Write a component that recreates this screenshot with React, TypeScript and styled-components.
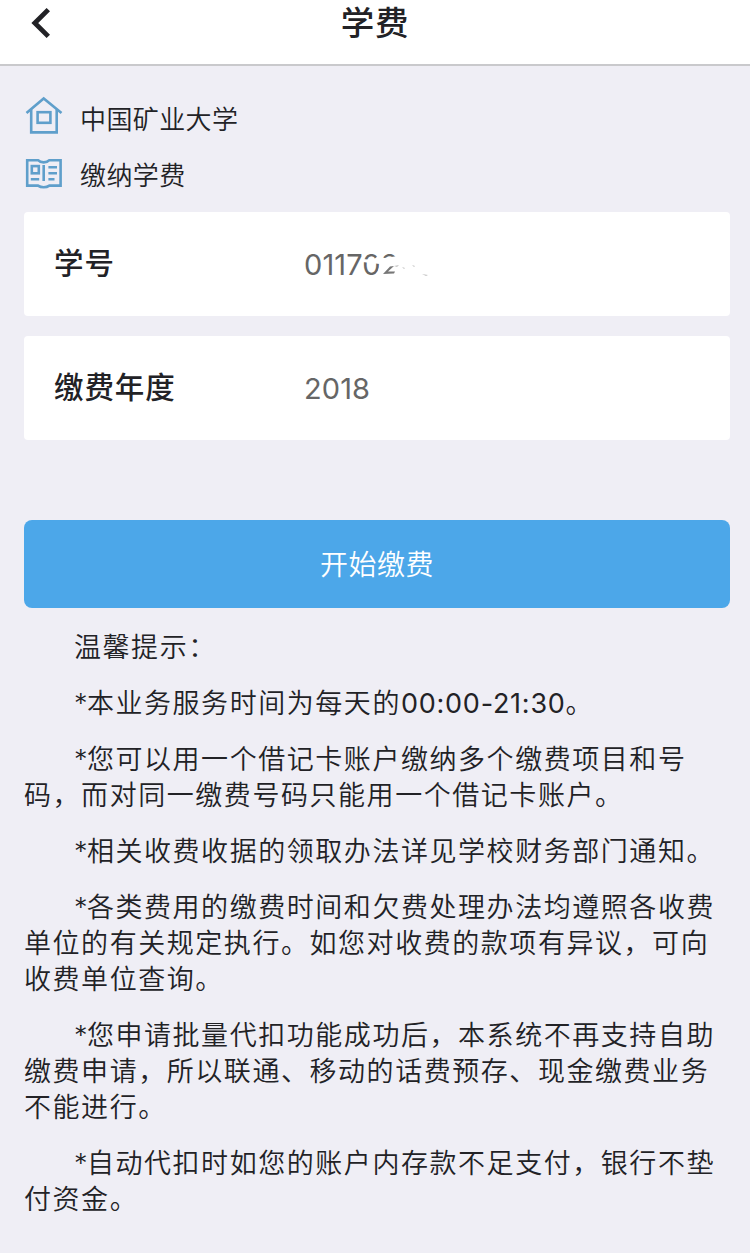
import React from "react";
import styled, { createGlobalStyle } from "styled-components";

const Global = createGlobalStyle`
  * { box-sizing: border-box; }
  body {
    margin: 0;
    background: #efeef5;
    color: #222226;
    font-family: Inter, "Noto Sans CJK SC", sans-serif;
  }
`;

const Page = styled.div`
  min-height: 1253px;
  overflow: hidden;
`;

const Header = styled.header`
  display: grid;
  grid-template-columns: 100px 1fr 100px;
  height: 66px;
  background: #fff;
  border-bottom: 2px solid #c9c9cc;
`;

const BackButton = styled.button`
  display: flex;
  width: 60px;
  height: 48px;
  padding: 7px 0 0 31px;
  border: 0;
  background: none;
`;

const Title = styled.h1`
  margin: 0;
  text-align: center;
  font-size: 33.5px;
  font-weight: 500;
  line-height: 46px;
  letter-spacing: 0.8px;
`;

const Main = styled.main`
  padding: 24px 20px 0 24px;
`;

const InfoRow = styled.div`
  display: flex;
  align-items: center;
  gap: 16px;
  height: 56px;
  font-size: 26px;
  font-weight: 350;
  line-height: 36px;
  letter-spacing: 0.4px;
`;

const InfoText = styled.span`
  padding-top: 3px;
`;

const Field = styled.div<{ $gap: number }>`
  display: flex;
  align-items: center;
  height: 104px;
  margin-top: ${(p) => p.$gap}px;
  padding: 0 30px 0 30px;
  border-radius: 4px;
  background: #fff;
`;

const FieldLabel = styled.span`
  width: 250px;
  padding-bottom: 2px;
  font-size: 29.5px;
  font-weight: 500;
  line-height: 40px;
  letter-spacing: 0.9px;
`;

const FieldValue = styled.span`
  position: relative;
  padding-top: 2px;
  color: #666;
  font-size: 29px;
  font-weight: 400;
  line-height: 40px;
  letter-spacing: 0.1px;
`;

const Smudge = styled.svg`
  position: absolute;
  left: 56px;
  top: 5px;
`;

const PayButton = styled.button`
  display: block;
  width: 100%;
  height: 88px;
  margin: 80px 0 22px;
  padding: 0 0 2px;
  border: 0;
  border-radius: 8px;
  background: #4ca7e9;
  color: #fff;
  font-family: inherit;
  font-size: 28px;
  font-weight: 350;
  letter-spacing: 0.5px;
`;

const Tip = styled.p`
  margin: 0 0 20px;
  font-size: 27px;
  font-weight: 350;
  line-height: 36px;
  letter-spacing: 1.55px;
`;

const Line = styled.span<{ $first: boolean }>`
  display: block;
  padding-left: ${(p) => (p.$first ? 50 : 0)}px;
  white-space: nowrap;
`;

const Digits = styled.span`
  font-weight: 370;
  letter-spacing: 0.75px;
`;

const Star = styled.span`
  letter-spacing: -0.6px;
`;

const tips: React.ReactNode[][] = [
  ["温馨提示："],
  [<><Star>*</Star>本业务服务时间为每天的<Digits>00:00-21:30</Digits>。</>],
  [<><Star>*</Star>您可以用一个借记卡账户缴纳多个缴费项目和号</>, "码，而对同一缴费号码只能用一个借记卡账户。"],
  [<><Star>*</Star>相关收费收据的领取办法详见学校财务部门通知。</>],
  [<><Star>*</Star>各类费用的缴费时间和欠费处理办法均遵照各收费</>, "单位的有关规定执行。如您对收费的款项有异议，可向", "收费单位查询。"],
  [<><Star>*</Star>您申请批量代扣功能成功后，本系统不再支持自助</>, "缴费申请，所以联通、移动的话费预存、现金缴费业务", "不能进行。"],
  [<><Star>*</Star>自动代扣时如您的账户内存款不足支付，银行不垫</>, "付资金。"],
];

const HouseIcon = () => (
  <svg width="40" height="46" viewBox="0 0 40 46" fill="none" stroke="#5f9fcb" strokeWidth="2.6">
    <path d="M2.5 18 L19.7 3.5 L37.5 18" />
    <path d="M7.2 14.5 V37.4 H32.7 V14.5" />
    <rect x="13.6" y="17.2" width="12.8" height="10.6" />
  </svg>
);

const BookIcon = () => (
  <svg width="40" height="40" viewBox="0 0 40 40" fill="none" stroke="#5f9fcb" strokeWidth="2.6">
    <path d="M3.2 6.2 H14 Q16 8.4 19.7 8.4 Q23.4 8.4 25.4 6.2 H36.6 V31.6 H25.4 Q23 33.3 19.7 33.3 Q16.4 33.3 14 31.6 H3.2 Z" />
    <rect x="7.8" y="12.1" width="7" height="7.2" />
    <path d="M19.7 11 V27 M24.4 13.3 H33 M24.4 19.3 H33 M24.4 25.3 H30.5 M6.8 25.3 H15.2" />
  </svg>
);

export default function App() {
  return (
    <Page>
      <Global />
      <Header>
        <BackButton aria-label="返回">
          <svg width="22" height="32" viewBox="0 0 22 32" fill="none" stroke="#222226" strokeWidth="4.8">
            <path d="M17.3 2.6 L3.8 16 L17.3 29.4" />
          </svg>
        </BackButton>
        <Title>学费</Title>
      </Header>
      <Main>
        <InfoRow><HouseIcon /><InfoText>中国矿业大学</InfoText></InfoRow>
        <InfoRow><BookIcon /><InfoText>缴纳学费</InfoText></InfoRow>
        <Field $gap={10}>
          <FieldLabel>学号</FieldLabel>
          <FieldValue>
            011702
            <Smudge width="72" height="34" viewBox="0 0 72 34">
              <path fill="#fff" d="M3 11 L13 12 L18 8 L24 10 L38 8 L46 9 V30 H22 L13 29 L18 23 L20 16 L10 15 L3 14 Z" />
              <path fill="#777" d="M23 26 L30 18.5 L34 18 L28 23.5 L35 23.5 L34 25.5 Z" />
              <path fill="#c4c4c4" d="M34 18 l5 -1 -2 2 Z M42 19 l3 1 -1 1 Z M52 17 l3 1 -1 1 Z M62 26 l6 1 -2 1 Z" />
            </Smudge>
          </FieldValue>
        </Field>
        <Field $gap={20}>
          <FieldLabel>缴费年度</FieldLabel>
          <FieldValue>2018</FieldValue>
        </Field>
        <PayButton>开始缴费</PayButton>
        {tips.map((lines, i) => (
          <Tip key={i}>
            {lines.map((line, j) => (
              <Line key={j} $first={j === 0}>{line}</Line>
            ))}
          </Tip>
        ))}
      </Main>
    </Page>
  );
}
